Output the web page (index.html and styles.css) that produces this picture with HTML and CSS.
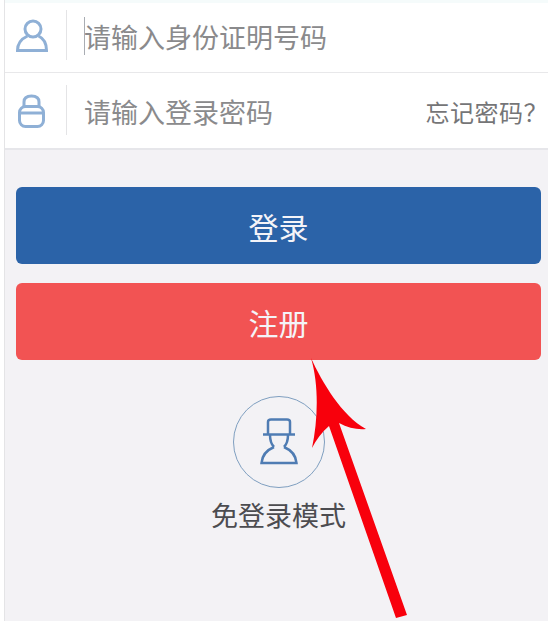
FILE: index.html
```html
<!DOCTYPE html>
<html>
<head>
<meta charset="utf-8">
<link rel="stylesheet" href="styles.css">
</head>
<body>
<div class="screen">
  <!-- Login form -->
  <div class="form">
    <div class="row row-first">
      <svg class="row-icon" width="36" height="40" viewBox="0 0 36 40" fill="none" stroke="#8fb0d6" stroke-width="3">
        <circle cx="17" cy="14" r="8"/>
        <path d="M11.500 21 C5 24 1.500 29 1.500 35.500 H30.500 C30.500 29 29 24 22.500 21"/>
      </svg>
      <div class="divider"></div>
      <div class="caret"></div>
      <span class="placeholder">请输入身份证明号码</span>
    </div>
    <div class="row row-second">
      <svg class="row-icon" width="36" height="40" viewBox="0 0 36 40" fill="none" stroke="#8fb0d6" stroke-width="3">
        <path d="M8 17 V12 C8 8 11 6 15.500 6 C20 6 23 8 23 12 V17"/>
        <rect x="3.500" y="16.500" width="24" height="20" rx="6"/>
        <path d="M4 23 H27"/>
      </svg>
      <div class="divider"></div>
      <span class="placeholder">请输入登录密码</span>
      <span class="forgot">忘记密码？</span>
    </div>
  </div>

  <!-- Buttons -->
  <div class="actions">
    <div class="btn btn-login">登录</div>
    <div class="btn btn-register">注册</div>
  </div>

  <!-- Guest mode -->
  <div class="guest">
    <div class="guest-circle">
      <svg width="38" height="48" viewBox="0 0 38 48" fill="none" stroke="#4f7cb3" stroke-width="2.500">
        <path d="M3 16.500 H35"/>
        <path d="M8 16 V4 Q8 1.500 11 1.500 H27 Q30 1.500 30 4 V16"/>
        <path d="M10 17 C10 24 12 27 14 29"/>
        <path d="M28 17 C28 24 26 27 24 29"/>
        <path d="M14 29 C7 32 2 38 1.500 45 H36.500 C36 38 31 32 24 29"/>
      </svg>
    </div>
    <div class="guest-label">免登录模式</div>
  </div>
</div>

<!-- Annotation arrow drawn over the screenshot -->
<svg class="arrow" width="548" height="621" viewBox="0 0 548 621">
  <path fill="#f8000c" d="M311 358 C322 382 342 416 366 429 C358 430 348 428 339 423 L407 615 L396 618 L329 426 C322 432 316 440 312 448 C318 420 319 385 311 358 Z"/>
</svg>
</body>
</html>
```

FILE: styles.css
```css
body {
  margin: 0;
  padding: 0;
  background-color: #ffffff;
  font-family: "Liberation Sans", "Noto Sans CJK SC", sans-serif;
}

.screen {
  margin-left: 4px;
  height: 621px;
  box-sizing: border-box;
  border-left: 1px solid #e4e4e6;
  background-color: #f3f2f5;
  overflow: hidden;
}

/* Form */
.form {
  background-color: #ffffff;
  border-top: 3px solid #f5fbfb;
  border-bottom: 2px solid #e6e6ea;
}

.row {
  display: flex;
  align-items: center;
  position: relative;
  box-sizing: border-box;
  padding-left: 11px;
}

.row-first {
  height: 70px;
  padding-bottom: 6px;
  border-bottom: 1px solid #e8e8ea;
}

.row-second {
  height: 75px;
  padding-bottom: 2px;
}

.row-icon {
  flex: none;
}

.divider {
  width: 1px;
  height: 50px;
  margin: 0 17px 0 14px;
  background-color: #e4e4e6;
}

.caret {
  position: absolute;
  left: 79px;
  top: 14px;
  width: 1px;
  height: 38px;
  background-color: #a9adb3;
}

.placeholder {
  padding-top: 3px;
  font-size: 27px;
  color: #8a8a8c;
}

.forgot {
  margin-left: auto;
  padding-top: 3px;
  font-size: 24px;
  color: #757577;
  letter-spacing: 0.500px;
}

/* Buttons */
.actions {
  display: flex;
  flex-direction: column;
  gap: 19px;
  padding: 37px 7px 0 11px;
}

.btn {
  height: 77px;
  display: flex;
  align-items: center;
  justify-content: center;
  border-radius: 6px;
  color: #f4f4f8;
  font-size: 30px;
}

.btn-login {
  background-color: #2b63a8;
}

.btn-register {
  background-color: #f25353;
}

/* Guest mode */
.guest {
  display: flex;
  flex-direction: column;
  align-items: center;
  padding-top: 36px;
  padding-left: 4px;
}

.guest-circle {
  width: 90px;
  height: 90px;
  display: flex;
  align-items: center;
  justify-content: center;
  border: 1.500px solid #7f9fc0;
  border-radius: 50%;
}

.guest-label {
  margin-top: 7px;
  font-size: 27px;
  color: #4c4c50;
}

/* Arrow overlay */
.arrow {
  position: absolute;
  left: 0;
  top: 0;
}
```
